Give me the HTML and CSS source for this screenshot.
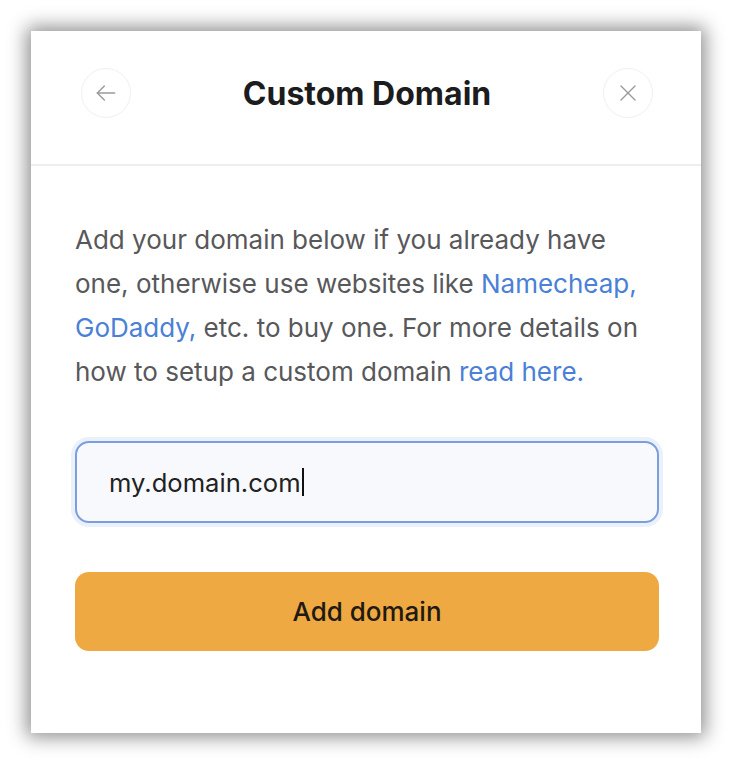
FILE: index.html
```html
<!DOCTYPE html>
<html lang="en">
<head>
<meta charset="UTF-8" />
<meta name="viewport" content="width=device-width, initial-scale=1" />
<title>Custom Domain</title>
<link rel="stylesheet" href="styles.css">
</head>
<body>

<div class="modal">
  <div class="modal-header">
    <button class="round-btn" aria-label="Back">
      <svg width="26" height="26" viewBox="0 0 24 24" fill="none" stroke="#9a9a9a" stroke-width="1.3" stroke-linecap="round" stroke-linejoin="round">
        <path d="M20 12H4" />
        <path d="M10.5 5.5L4 12l6.5 6.5" />
      </svg>
    </button>
    <h1>Custom Domain</h1>
    <button class="round-btn" aria-label="Close">
      <svg width="24" height="24" viewBox="0 0 24 24" fill="none" stroke="#9a9a9a" stroke-width="1.4" stroke-linecap="round">
        <path d="M5 5l14 14" />
        <path d="M19 5L5 19" />
      </svg>
    </button>
  </div>

  <div class="modal-body">
    <p class="intro">
      Add your domain below if you already have<br>
      one, otherwise use websites like <a href="#">Namecheap,</a><br>
      <a href="#">GoDaddy,</a> etc. to buy one. For more details on<br>
      how to setup a custom domain <a href="#">read here.</a>
    </p>

    <div class="domain-input">my.domain.com<span class="caret"></span></div>

    <button class="add-btn">Add domain</button>
  </div>
</div>

</body>
</html>
```

FILE: styles.css
```css
* {
  box-sizing: border-box;
}
body {
  margin: 0;
  padding: 31px;
  background: #fff;
  font-family: Inter, 'Noto Sans', sans-serif;
}
.modal {
  width: 670px;
  height: 702px;
  background: #fff;
  box-shadow: 0 0 18px 4px rgba(0, 0, 0, 0.45);
}
.modal-header {
  display: flex;
  align-items: center;
  justify-content: space-between;
  padding: 37px 48px 46px 50px;
  border-bottom: 2px solid #eeeeee;
}
.modal-header h1 {
  margin: 0;
  font-size: 32px;
  font-weight: 700;
  color: #1c1c1e;
}
.round-btn {
  width: 50px;
  height: 50px;
  border-radius: 50%;
  border: 1.5px solid #f0f0f0;
  background: #fff;
  display: flex;
  align-items: center;
  justify-content: center;
  padding: 0;
  cursor: pointer;
}
.modal-body {
  padding: 52px 42px 0 44px;
}
.intro {
  margin: 0;
  font-size: 26px;
  line-height: 44px;
  color: #58585b;
}
.intro a {
  color: #4a80d6;
  text-decoration: none;
}
.domain-input {
  margin-top: 47px;
  height: 82px;
  border: 2px solid #7b9edf;
  border-radius: 14px;
  background: #f8f9fc;
  box-shadow: 0 0 0 4px #ebf1fb;
  padding: 0 32px;
  display: flex;
  align-items: center;
  font-size: 25.6px;
  color: #222;
}
.caret {
  display: inline-block;
  width: 2px;
  height: 28px;
  margin-left: 1px;
  background: #111;
}
.add-btn {
  display: block;
  width: 100%;
  height: 79px;
  margin-top: 49px;
  border: none;
  border-radius: 14px;
  background: #eea942;
  font-family: Inter, 'Noto Sans', sans-serif;
  font-size: 26px;
  font-weight: 500;
  color: #1f1a14;
  cursor: pointer;
}
```
